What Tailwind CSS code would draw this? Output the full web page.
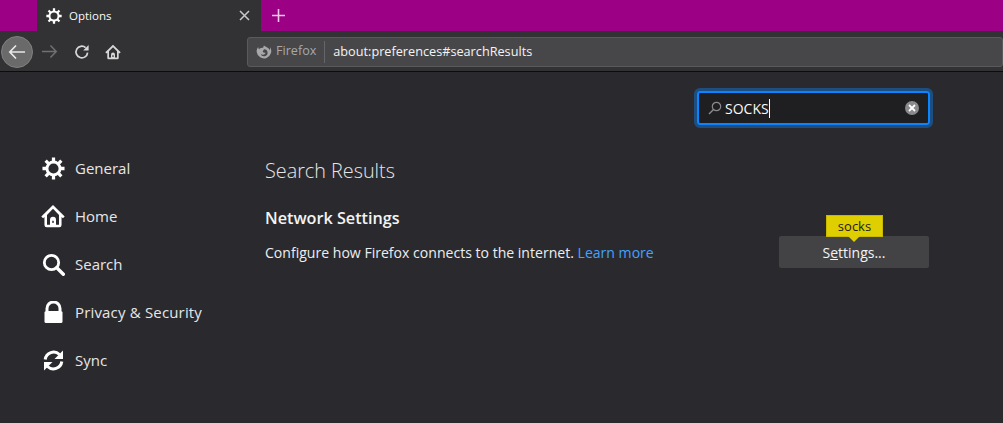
<!DOCTYPE html>
<html lang="en">
<head>
<meta charset="UTF-8" />
<title>Options</title>
<script src="https://cdn.jsdelivr.net/npm/@tailwindcss/browser@4"></script>
</head>
<body class="bg-[#2a2a2e] h-[423px] w-[1003px] overflow-hidden text-[#f9f9fa] font-['Open_Sans','Noto_Sans',sans-serif]">

<!-- Tab strip -->
<div class="flex h-[31px] bg-[#9c0085]">
  <div class="w-[37px]"></div>
  <div class="w-[224px] bg-[#323234] flex items-center pl-[9px] pr-[11px]">
    <svg class="w-[16px] h-[16px]" viewBox="0 0 24 24" fill="none" stroke="#fff"><circle cx="12" cy="12" r="6.800" stroke-width="3"/><path d="M12 .5v4.500M12 19v4.500M.5 12H5M19 12h4.500M3.800 3.800l3.300 3.300M16.900 16.900l3.300 3.300M20.200 3.800l-3.300 3.300M7.100 16.900l-3.300 3.300" stroke-width="3.400"/></svg>
    <span class="ml-[7px] text-[11.5px] flex-1">Options</span>
    <svg class="w-[11px] h-[11px]" viewBox="0 0 11 11"><path d="M1 1l9 9M10 1l-9 9" stroke="#c8c8c8" stroke-width="1.5"/></svg>
  </div>
  <div class="ml-[10px] flex items-center">
    <svg class="w-[15px] h-[15px]" viewBox="0 0 15 15"><path d="M7.500 1v13M1 7.500h13" stroke="#f0c8e8" stroke-width="1.600"/></svg>
  </div>
</div>

<!-- Nav bar -->
<div class="flex items-center h-[39px] pt-[1px] bg-[#323234] border-b border-[#0c0c0d] box-content -mb-px pl-[1px]">
  <div class="w-[32px] h-[32px] rounded-full bg-[#6a6a6b] border border-[#808081] flex items-center justify-center">
    <svg class="w-[18px] h-[16px]" viewBox="0 0 18 16"><path d="M8 1.500L1.800 8 8 14.500M2 8h15" fill="none" stroke="#e8e8e8" stroke-width="1.700"/></svg>
  </div>
  <svg class="ml-[8px] w-[17px] h-[15px]" viewBox="0 0 18 16"><path d="M10 1.500L16.200 8 10 14.500M16 8H1" fill="none" stroke="#707071" stroke-width="1.600"/></svg>
  <svg class="ml-[16px] w-[16px] h-[16px]" viewBox="0 0 16 16"><path d="M13.600 8.600A5.800 5.800 0 1 1 11.600 3.600" fill="none" stroke="#d8d8d8" stroke-width="1.700"/><path d="M14.600 1v5.400H9.200z" fill="#d8d8d8"/></svg>
  <svg class="ml-[15px] w-[16px] h-[16px]" viewBox="0 0 16 16"><path fill-rule="evenodd" d="M8 .8L.3 8.300l1.200 1.200.8-.7V14a1.300 1.300 0 0 0 1.300 1.300h8.800A1.300 1.300 0 0 0 13.700 14V8.800l.8.7 1.200-1.200zM4 7.300L8 3.300l4 4v6.300H4z" fill="#d8d8d8"/><path d="M6 15v-4.500a2 2 0 0 1 4 0V15z" fill="#d8d8d8"/><rect x="7.400" y="11.200" width="1.200" height="1.800" fill="#323234"/></svg>

  <div class="ml-[126px] w-[756px] h-[30px] bg-[#474749] border border-[#5a5a5c] rounded-[3px] flex items-center pl-[8px]">
    <svg class="w-[16px] h-[16px]" viewBox="0 0 16 16"><path d="M8 1.500c-.6 1-1 1.500-.6 2.300C4.800 3.400 3.500 4.500 3.200 5.300 2.600 4.900 2.300 4 2.400 3 .9 4.500.5 6.500.7 8a7.300 7.300 0 1 0 13.300-5c.3 1.500.1 2.500-.4 3.200C13.300 3.800 10.500 3.500 8 1.500zM8 5.300a3.500 3.500 0 1 1-3.300 4.500C5.500 10.800 7 11 8 10.600 9 10.200 9.600 9.300 9.500 8.400 9 8.800 8 8.700 7.500 8.500 7 8.200 6.700 7.800 6.800 7.500 7 7 7.500 6.500 8 5.300z" fill="#a8a8aa"/></svg>
    <span class="ml-[4px] text-[12.6px] text-[#a8a8aa]">Firefox</span>
    <div class="ml-[8px] w-px h-[22px] bg-[#66666a]"></div>
    <span class="ml-[8px] text-[12.7px] text-[#f4f4f5]">about:preferences#searchResults</span>
  </div>
</div>

<!-- Page -->
<div class="relative flex pt-[20px]">
  <nav class="w-[265px] pl-[42px] pt-[53px] flex flex-col text-[15px] text-[#e6e6e7]">
    <a class="h-[48px] flex items-center gap-[10px]">
      <svg class="w-[23px] h-[23px]" viewBox="0 0 24 24" fill="none" stroke="#fff"><circle cx="12" cy="12" r="6.800" stroke-width="3"/><path d="M12 .5v4.500M12 19v4.500M.5 12H5M19 12h4.500M3.800 3.800l3.300 3.300M16.900 16.900l3.300 3.300M20.200 3.800l-3.300 3.300M7.100 16.900l-3.300 3.300" stroke-width="3.400"/></svg>
      General
    </a>
    <a class="h-[48px] flex items-center gap-[10px]">
      <svg class="w-[24px] h-[24px] -ml-[1px]" viewBox="0 0 16 16"><path fill-rule="evenodd" d="M8 .6L.2 8.300l1.200 1.200.9-.8V14a1.500 1.500 0 0 0 1.500 1.500h8.400A1.500 1.500 0 0 0 13.700 14V8.700l.9.8 1.200-1.200zM4 7.300L8 3.200l4 4.100v6.500H4z" fill="#fff"/><path d="M6 15v-4.500a2 2 0 0 1 4 0V15z" fill="#fff"/><rect x="7.500" y="11.200" width="1" height="1.400" fill="#2a2a2e"/></svg>
      Home
    </a>
    <a class="h-[48px] flex items-center gap-[10px]">
      <svg class="w-[23px] h-[23px]" viewBox="0 0 23 23"><circle cx="9.500" cy="9.500" r="7.200" fill="none" stroke="#fff" stroke-width="2.800"/><path d="M14.800 14.800l6.500 6.500" stroke="#fff" stroke-width="3.400" stroke-linecap="round"/></svg>
      Search
    </a>
    <a class="h-[48px] flex items-center gap-[10px] tracking-[0.17px]">
      <svg class="w-[23px] h-[23px]" viewBox="0 0 23 23"><path d="M5 10V7.500a6.500 6.500 0 0 1 13 0V10" fill="none" stroke="#fff" stroke-width="3"/><rect x="2.500" y="10" width="18" height="12" rx="1.500" fill="#fff"/></svg>
      Privacy &amp; Security
    </a>
    <a class="h-[48px] flex items-center gap-[10px]">
      <svg class="w-[23px] h-[23px]" viewBox="0 0 23 23"><path d="M3.200 10.500A8.500 8.500 0 0 1 17.500 5.500" fill="none" stroke="#fff" stroke-width="3"/><path d="M21 1.500v8.500h-8.500z" fill="#fff"/><path d="M19.800 12.500A8.500 8.500 0 0 1 5.500 17.500" fill="none" stroke="#fff" stroke-width="3"/><path d="M2 21.500V13h8.500z" fill="#fff"/></svg>
      Sync
    </a>
  </nav>

  <main class="flex-1 pt-[65px] pr-[74px]">
    <h1 class="text-[19.800px] font-light leading-[30px] text-[#e6e6e7]">Search Results</h1>
    <h2 class="mt-[20px] text-[16.200px] font-semibold leading-[24px] text-[#f4f4f5]">Network Settings</h2>
    <div class="mt-[6px] flex items-center justify-between h-[32px]">
      <p class="pt-[2px] text-[14.070px] text-[#ededf0]">Configure how Firefox connects to the internet. <a class="text-[#45a1ff]">Learn more</a></p>
      <button class="relative w-[150px] h-[32px] bg-[#434345] rounded-[2px] text-[14px] text-[#f4f4f5]">
        S<span class="underline">e</span>ttings...
        <span class="absolute left-[47px] -top-[21px] w-[57px] h-[22px] bg-[#e0cf00] border border-[#c9b800] text-[#1a1a1a] text-[13px] leading-[20px] text-center">socks</span>
        <span class="absolute left-[69px] top-0 w-0 h-0 border-x-[6px] border-x-transparent border-t-[6px] border-t-[#e0cf00]"></span>
      </button>
    </div>
  </main>

  <!-- Search box -->
  <div class="absolute left-[697px] top-[20px] w-[233px] h-[34px] rounded-[3px] border-[2px] border-[#0a84ff] outline-[3px] outline-[#0a84ff]/40 bg-[#1f1f21] flex items-center pl-[9px] pr-[9px]">
    <svg class="w-[14px] h-[14px]" viewBox="0 0 14 14"><circle cx="8.500" cy="5.500" r="4.200" fill="none" stroke="#8a8a8c" stroke-width="1.200"/><path d="M5.500 8.500L1 13" stroke="#8a8a8c" stroke-width="1.400"/></svg>
    <span class="ml-[3px] text-[14px] flex-1"><span class="border-r border-white pr-0">SOCKS</span></span>
    <span class="w-[14px] h-[14px] rounded-full bg-[#8a8a8c] flex items-center justify-center">
      <svg class="w-[8px] h-[8px]" viewBox="0 0 8 8"><path d="M1 1l6 6M7 1L1 7" stroke="#fff" stroke-width="1.800"/></svg>
    </span>
  </div>
</div>
</body>
</html>
